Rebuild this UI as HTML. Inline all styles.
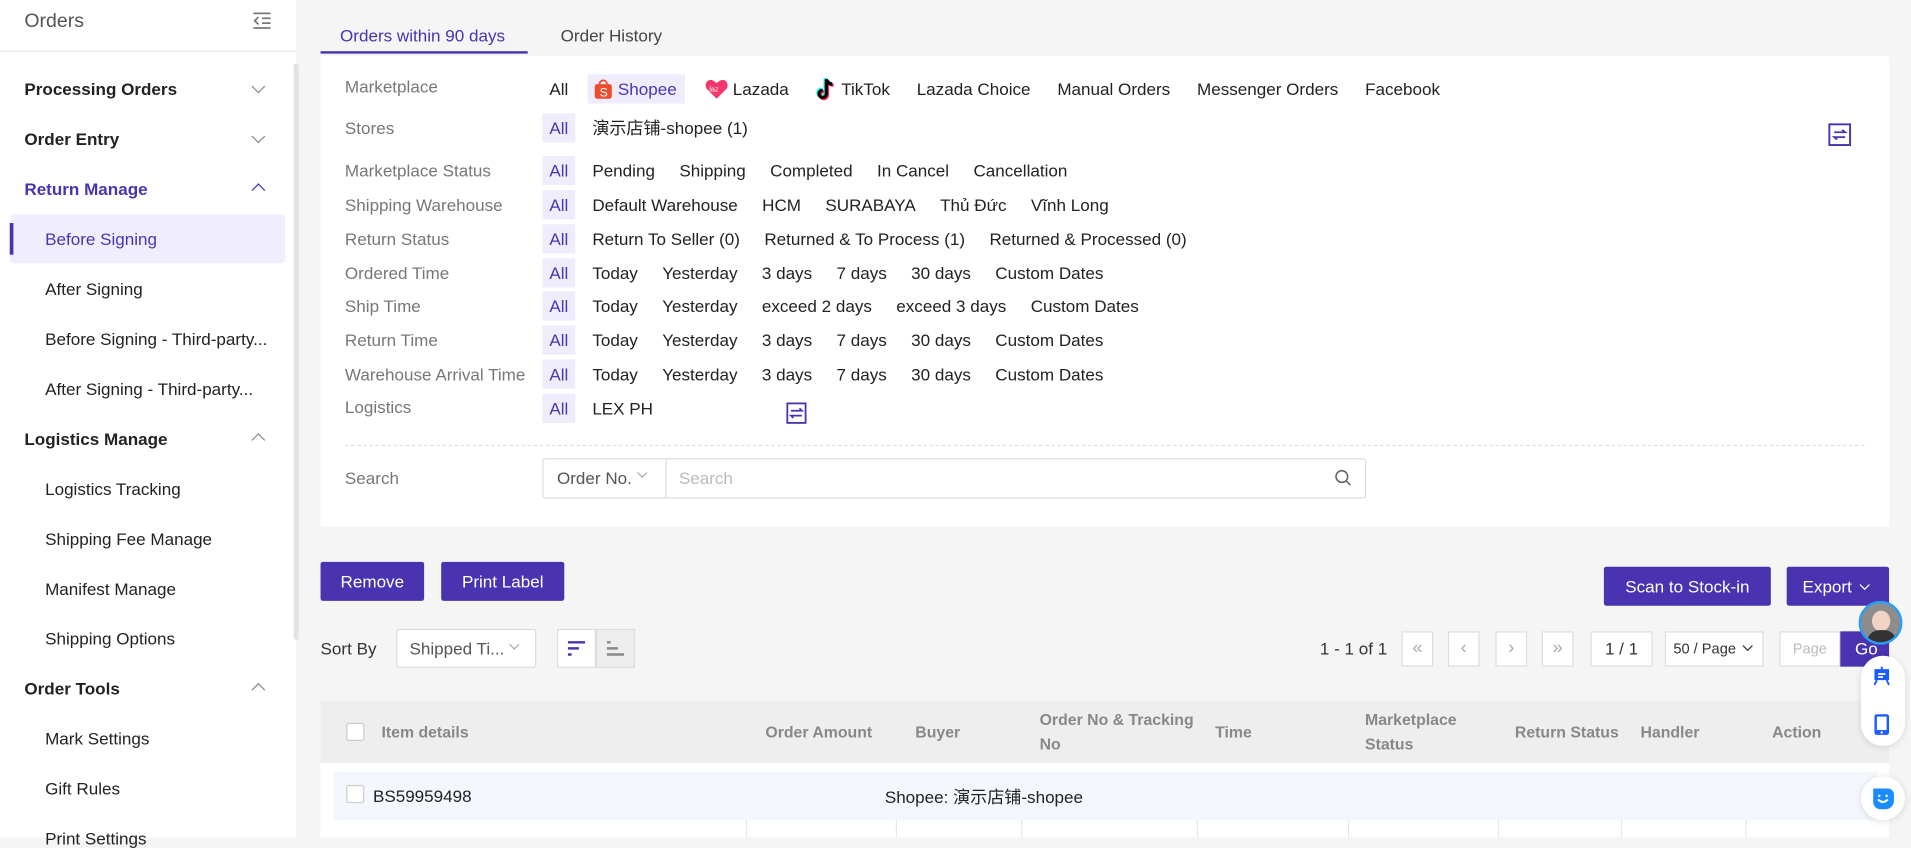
<!DOCTYPE html>
<html><head><meta charset="utf-8">
<style>
*{box-sizing:border-box;margin:0;padding:0}
html,body{width:1911px;height:837px;overflow:hidden;background:#f5f5f5}
#w{position:absolute;left:0;top:0;width:1568px;height:687px;transform:scale(1.21875);transform-origin:0 0;font-family:"Liberation Sans","Noto Sans CJK SC",sans-serif;font-size:14px;color:#222}
.a{position:absolute;white-space:nowrap}
.sb{position:absolute;left:0;top:0;width:243px;height:687px;background:#fff}
.si{position:absolute;left:20px;font-size:14px;font-weight:bold;color:#222}
.ss{position:absolute;left:37px;font-size:14px;color:#222}
.chev{position:absolute;left:208px;width:8px;height:8px;border-right:1.5px solid #888;border-bottom:1.5px solid #888}
.dn{transform:rotate(45deg)}
.up{transform:rotate(-135deg)}
.card{position:absolute;left:263px;top:46px;width:1287px;height:386px;background:#fff}
.lbl{position:absolute;left:20px;color:#777;font-size:14px}
.row{position:absolute;left:182px;display:flex;align-items:center;gap:20px;font-size:14px;color:#222}
.all{background:#efedfb;color:#4a36b0;width:27px;height:24px;line-height:24px;text-align:center;margin-right:-6px}
.btn{position:absolute;background:#4a33b1;color:#fff;border-radius:2px;text-align:center;font-size:14px;height:32px;line-height:32px}
.pb{position:absolute;top:518px;height:29px;width:26px;background:#fff;border:1px solid #ddd;color:#aaa;text-align:center;line-height:26px;font-size:15px}
.th{position:absolute;color:#888;font-size:13px;font-weight:bold;line-height:20px}
.vl{position:absolute;top:673px;width:1px;height:14px;background:#e8e8e8}
.cb{position:absolute;width:15px;height:15px;border:1px solid #ccc;border-radius:2px;background:#fff}
</style></head><body><div id="w">
<div class="sb">
 <div class="a" style="left:20px;top:9px;font-size:16px;color:#555">Orders</div>
 <svg class="a" style="left:207px;top:10px" width="16" height="14" viewBox="0 0 16 14"><path d="M1 1H15M8 5H15M8 9H15M1 13H15M5 4L2 7L5 10" stroke="#777" stroke-width="1.4" fill="none"/></svg>
 <div class="a" style="left:0;top:41px;width:243px;height:2px;background:#f0f0f0"></div>
 <div class="a" style="left:241px;top:52px;width:4px;height:473px;background:#e2e2e2;border-radius:2px"></div>
 <div class="si" style="top:65px">Processing Orders</div><div class="chev dn" style="top:67px"></div>
 <div class="si" style="top:106px">Order Entry</div><div class="chev dn" style="top:108px"></div>
 <div class="si" style="top:147px;color:#4a33b1">Return Manage</div><div class="chev up" style="top:152px;border-color:#4a33b1"></div>
 <div class="a" style="left:8px;top:176px;width:226px;height:40px;background:#f0eefc;border-radius:3px"></div>
 <div class="a" style="left:8px;top:183px;width:3px;height:26px;background:#4a33b1"></div>
 <div class="ss" style="top:188px;color:#4a33b1">Before Signing</div>
 <div class="ss" style="top:229px">After Signing</div>
 <div class="ss" style="top:270px">Before Signing - Third-party...</div>
 <div class="ss" style="top:311px">After Signing - Third-party...</div>
 <div class="si" style="top:352px">Logistics Manage</div><div class="chev up" style="top:357px"></div>
 <div class="ss" style="top:393px">Logistics Tracking</div>
 <div class="ss" style="top:434px">Shipping Fee Manage</div>
 <div class="ss" style="top:475px">Manifest Manage</div>
 <div class="ss" style="top:516px">Shipping Options</div>
 <div class="si" style="top:557px">Order Tools</div><div class="chev up" style="top:562px"></div>
 <div class="ss" style="top:598px">Mark Settings</div>
 <div class="ss" style="top:639px">Gift Rules</div>
 <div class="ss" style="top:680px">Print Settings</div>
</div>

<div class="a" style="left:279px;top:21px;color:#4a33b1;font-size:14px">Orders within 90 days</div>
<div class="a" style="left:460px;top:21px;color:#444;font-size:14px">Order History</div>
<div class="a" style="left:263px;top:42px;width:170px;height:2px;background:#4a33b1"></div>

<div class="card">
 <div class="lbl" style="top:17px">Marketplace</div>
 <div class="row" style="top:15px;gap:22px">
  <span style="width:27px;text-align:center;margin-right:-6px">All</span>
  <span style="background:#efedfb;color:#4a36b0;padding:2px 7px 2px 5px;margin-left:-6px;display:flex;align-items:center;gap:4px;height:24px"><svg width="16" height="18" viewBox="0 0 16 18"><path d="M5 5C5 1 11 1 11 5" stroke="#ee4d2d" stroke-width="1.5" fill="none"/><rect x="1" y="5" width="14" height="12" rx="2" fill="#ee4d2d"/><text x="5" y="15" font-size="10" fill="#fff" font-family="Liberation Sans">S</text></svg>Shopee</span>
  <span style="display:flex;align-items:center;gap:3px;margin-left:-6px"><svg width="20" height="18" viewBox="0 0 20 18"><path d="M10 17L2 9C-1 5 3 0 7 2L10 4L13 2C17 0 21 5 18 9Z" fill="#f5376b"/><text x="4" y="11" font-size="6" fill="#fff" font-family="Liberation Sans">laz</text></svg>Lazada</span>
  <span style="display:flex;align-items:center;gap:3px"><svg width="18" height="20" viewBox="0 0 18 20"><path d="M9 2V14A3 3 0 1 1 6 11M9 2C10 5 12 6 14 6" stroke="#25f4ee" stroke-width="2.6" fill="none" transform="translate(-1,-1)"/><path d="M9 2V14A3 3 0 1 1 6 11M9 2C10 5 12 6 14 6" stroke="#fe2c55" stroke-width="2.6" fill="none" transform="translate(1,1)"/><path d="M9 2V14A3 3 0 1 1 6 11M9 2C10 5 12 6 14 6" stroke="#000" stroke-width="2.6" fill="none"/></svg>TikTok</span>
  <span>Lazada Choice</span><span>Manual Orders</span><span>Messenger Orders</span><span>Facebook</span>
 </div>
 <div class="lbl" style="top:51px">Stores</div>
 <div class="row" style="top:47px"><span class="all">All</span><span>演示店铺-shopee (1)</span></div>
 <svg class="a" style="left:1237px;top:55px" width="19" height="19" viewBox="0 0 19 19"><rect x="1" y="1" width="17" height="17" fill="none" stroke="#4a33b1" stroke-width="1.6"/><path d="M5 7.5H14L11.5 5.5M14 11.5H5L7.5 13.5" stroke="#4a33b1" stroke-width="1.5" fill="none"/></svg>
 <div class="lbl" style="top:86px">Marketplace Status</div>
 <div class="row" style="top:82px"><span class="all">All</span><span>Pending</span><span>Shipping</span><span>Completed</span><span>In Cancel</span><span>Cancellation</span></div>
 <div class="lbl" style="top:114px">Shipping Warehouse</div>
 <div class="row" style="top:110px"><span class="all">All</span><span>Default Warehouse</span><span>HCM</span><span>SURABAYA</span><span>Thủ Đức</span><span>Vĩnh Long</span></div>
 <div class="lbl" style="top:142px">Return Status</div>
 <div class="row" style="top:138px"><span class="all">All</span><span>Return To Seller (0)</span><span>Returned &amp; To Process (1)</span><span>Returned &amp; Processed (0)</span></div>
 <div class="lbl" style="top:170px">Ordered Time</div>
 <div class="row" style="top:166px"><span class="all">All</span><span>Today</span><span>Yesterday</span><span>3 days</span><span>7 days</span><span>30 days</span><span>Custom Dates</span></div>
 <div class="lbl" style="top:197px">Ship Time</div>
 <div class="row" style="top:193px"><span class="all">All</span><span>Today</span><span>Yesterday</span><span>exceed 2 days</span><span>exceed 3 days</span><span>Custom Dates</span></div>
 <div class="lbl" style="top:225px">Return Time</div>
 <div class="row" style="top:221px"><span class="all">All</span><span>Today</span><span>Yesterday</span><span>3 days</span><span>7 days</span><span>30 days</span><span>Custom Dates</span></div>
 <div class="lbl" style="top:253px">Warehouse Arrival Time</div>
 <div class="row" style="top:249px"><span class="all">All</span><span>Today</span><span>Yesterday</span><span>3 days</span><span>7 days</span><span>30 days</span><span>Custom Dates</span></div>
 <div class="lbl" style="top:280px">Logistics</div>
 <div class="row" style="top:277px"><span class="all">All</span><span>LEX PH</span></div>
 <svg class="a" style="left:382px;top:284px" width="17" height="18" viewBox="0 0 17 18"><rect x="1" y="1" width="15" height="16" fill="none" stroke="#4a33b1" stroke-width="1.5"/><path d="M4 7H13L11 5M13 11H4L6 13" stroke="#4a33b1" stroke-width="1.4" fill="none"/></svg>
 <div class="a" style="left:20px;top:319px;width:1247px;border-top:1px dashed #e0e0e0"></div>
 <div class="lbl" style="top:338px">Search</div>
 <div class="a" style="left:182px;top:330px;width:676px;height:33px;border:1px solid #ddd;border-radius:2px;background:#fff"></div>
 <div class="a" style="left:283px;top:330px;width:1px;height:33px;background:#ddd"></div>
 <div class="a" style="left:194px;top:338px;color:#555">Order No.</div>
 <div class="a" style="left:261px;top:339px;width:6px;height:6px;border-right:1px solid #aaa;border-bottom:1px solid #aaa;transform:rotate(45deg)"></div>
 <div class="a" style="left:294px;top:338px;color:#bbb">Search</div>
 <svg class="a" style="left:832px;top:339px" width="15" height="15" viewBox="0 0 15 15"><circle cx="6" cy="6" r="4.8" stroke="#666" stroke-width="1.3" fill="none"/><path d="M9.5 9.5L13 13" stroke="#666" stroke-width="1.3"/></svg>
</div>

<div class="btn" style="left:263px;top:461px;width:85px">Remove</div>
<div class="btn" style="left:362px;top:461px;width:101px">Print Label</div>
<div class="btn" style="left:1316px;top:465px;width:137px">Scan to Stock-in</div>
<div class="btn" style="left:1466px;top:465px;width:84px;text-align:left;padding-left:13px">Export<span style="display:inline-block;width:6px;height:6px;border-right:1.5px solid #fff;border-bottom:1.5px solid #fff;transform:rotate(45deg);margin-left:8px;position:relative;top:-3px"></span></div>

<div class="a" style="left:263px;top:524px;color:#333">Sort By</div>
<div class="a" style="left:325px;top:516px;width:115px;height:32px;background:#fff;border:1px solid #ddd;border-radius:2px"></div>
<div class="a" style="left:336px;top:524px;color:#555">Shipped Ti...</div>
<div class="a" style="left:419px;top:526px;width:6px;height:6px;border-right:1px solid #aaa;border-bottom:1px solid #aaa;transform:rotate(45deg)"></div>
<div class="a" style="left:457px;top:516px;width:32px;height:32px;background:#fff;border:1px solid #ddd"></div>
<div class="a" style="left:489px;top:516px;width:32px;height:32px;background:#eee;border:1px solid #ddd"></div>
<svg class="a" style="left:465px;top:524px" width="16" height="16" viewBox="0 0 16 16"><path d="M1 3H15M1 8H10M1 13H4" stroke="#4a33b1" stroke-width="2"/></svg>
<svg class="a" style="left:497px;top:524px" width="16" height="16" viewBox="0 0 16 16"><path d="M1 3H4M1 8H10M1 13H15" stroke="#888" stroke-width="2"/></svg>

<div class="a" style="left:1083px;top:524px;color:#333">1 - 1 of 1</div>
<div class="pb" style="left:1150px">«</div>
<div class="pb" style="left:1188px">‹</div>
<div class="pb" style="left:1227px">›</div>
<div class="pb" style="left:1265px">»</div>
<div class="pb" style="left:1305px;width:51px;color:#333;font-size:14px">1 / 1</div>
<div class="pb" style="left:1366px;width:81px;color:#333;font-size:12px;text-align:left;padding-left:6px">50 / Page<span style="position:absolute;right:9px;top:8px;width:6px;height:6px;border-right:1.5px solid #333;border-bottom:1.5px solid #333;transform:rotate(45deg)"></span></div>
<div class="pb" style="left:1460px;width:50px;color:#bbb;font-size:12px">Page</div>
<div class="a" style="left:1510px;top:518px;width:40px;height:29px;background:#4a33b1;color:#fff;line-height:29px;padding-left:12px">Go</div>

<div class="a" style="left:263px;top:575px;width:1287px;height:51px;background:#eee"></div>
<div class="cb" style="left:284px;top:593px"></div>
<div class="th" style="left:313px;top:591px">Item details</div>
<div class="th" style="left:628px;top:591px">Order Amount</div>
<div class="th" style="left:751px;top:591px">Buyer</div>
<div class="th" style="left:853px;top:581px">Order No &amp; Tracking<br>No</div>
<div class="th" style="left:997px;top:591px">Time</div>
<div class="th" style="left:1120px;top:581px">Marketplace<br>Status</div>
<div class="th" style="left:1243px;top:591px">Return Status</div>
<div class="th" style="left:1346px;top:591px">Handler</div>
<div class="th" style="left:1454px;top:591px">Action</div>
<div class="a" style="left:263px;top:626px;width:1287px;height:61px;background:#fff"></div>
<div class="a" style="left:274px;top:633px;width:1266px;height:40px;background:#f4f7fd"></div>
<div class="cb" style="left:284px;top:644px"></div>
<div class="a" style="left:306px;top:645px;color:#222">BS59959498</div>
<div class="a" style="left:726px;top:644px;color:#222">Shopee: 演示店铺-shopee</div>
<div class="vl" style="left:612px"></div><div class="vl" style="left:735px"></div><div class="vl" style="left:838px"></div><div class="vl" style="left:982px"></div><div class="vl" style="left:1106px"></div><div class="vl" style="left:1229px"></div><div class="vl" style="left:1330px"></div><div class="vl" style="left:1432px"></div>

<div class="a" style="left:1527px;top:538px;width:36px;height:74px;background:#fff;border-radius:18px;box-shadow:0 1px 6px rgba(0,0,0,.12)"></div>
<svg class="a" style="left:1535px;top:546px" width="18" height="18" viewBox="0 0 18 18"><path d="M3 3H15V12H3Z" fill="#1a5cff"/><path d="M9 1V3M5 12L3 16M13 12L15 16" stroke="#1a5cff" stroke-width="1.6"/><path d="M6 7H12M6 9.5H10" stroke="#fff" stroke-width="1.4"/></svg>
<svg class="a" style="left:1537px;top:585px" width="14" height="19" viewBox="0 0 14 19"><rect x="1" y="1" width="12" height="17" rx="2" fill="#1a5cff"/><rect x="3" y="3" width="8" height="11" fill="#fff"/><circle cx="7" cy="16" r="1" fill="#fff"/></svg>
<div class="a" style="left:1525px;top:493px;width:36px;height:36px;border-radius:50%;background:#8d8d8d;border:2px solid #2a9df4;overflow:hidden"><div style="position:absolute;left:9px;top:6px;width:15px;height:17px;border-radius:50%;background:#f1d4c4"></div><div style="position:absolute;left:5px;top:22px;width:24px;height:14px;border-radius:10px 10px 0 0;background:#333"></div></div>
<div class="a" style="left:1527px;top:637px;width:36px;height:36px;border-radius:50%;background:#fff;box-shadow:0 1px 6px rgba(0,0,0,.12)"></div>
<svg class="a" style="left:1535px;top:645px" width="20" height="20" viewBox="0 0 20 20"><path d="M2 2H14A5 5 0 0 1 19 7V12A7 7 0 0 1 12 19H8A6 6 0 0 1 2 13Z" fill="#1a8cff"/><path d="M6 11Q10 15 14 11" stroke="#fff" stroke-width="1.6" fill="none"/><circle cx="7" cy="8" r="1" fill="#fff"/><circle cx="13" cy="8" r="1" fill="#fff"/></svg>
</div></body></html>
